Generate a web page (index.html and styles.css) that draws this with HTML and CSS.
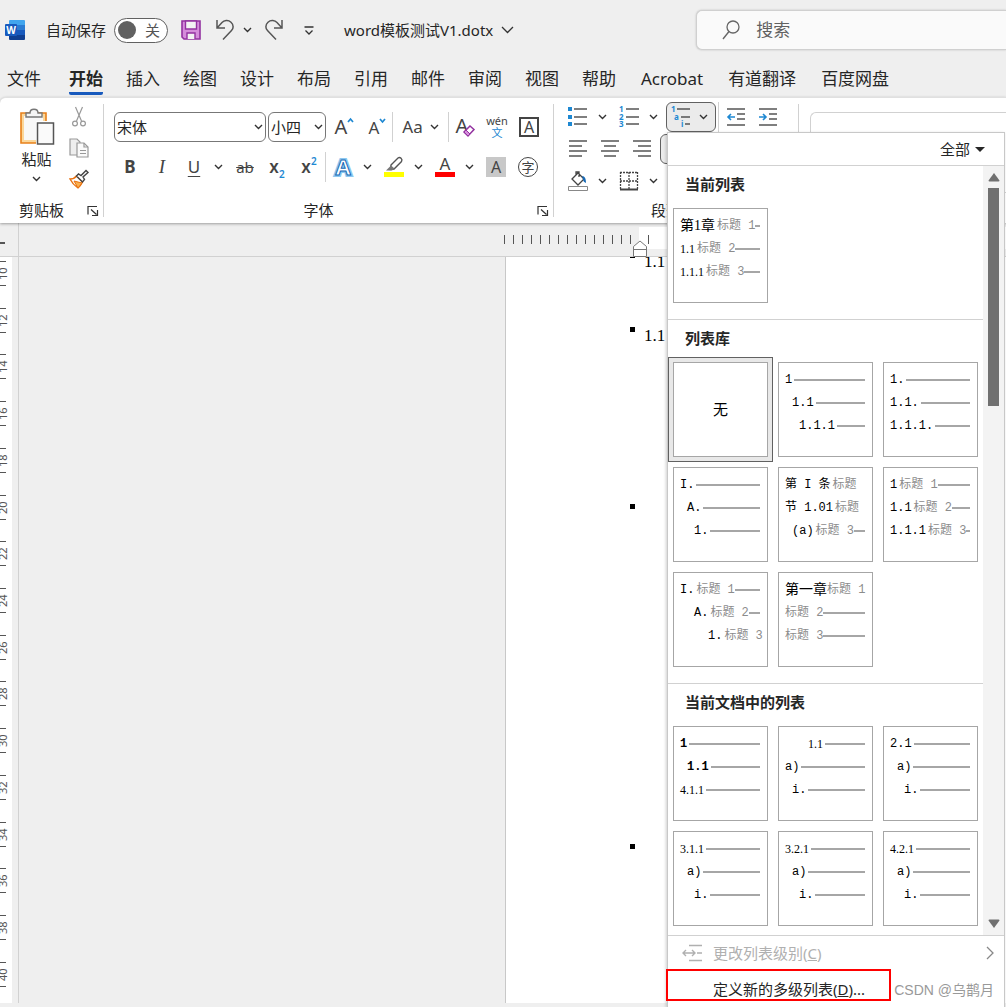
FILE: index.html
```html
<!DOCTYPE html>
<html lang="zh-CN">
<head>
  <meta charset="UTF-8">
  <meta name="viewport" content="width=device-width, initial-scale=1.0">
  <title>word模板测试V1.dotx</title>
  <link rel="stylesheet" href="styles.css">
</head>
<body>
  <svg class="defs" aria-hidden="true">
    <symbol id="caret" viewBox="0 0 9 6"><path d="M1 1l3.5 3.5L8 1" fill="none" stroke="#333" stroke-width="1.4"/></symbol>
    <symbol id="launcher" viewBox="0 0 12 12"><path d="M1 9.500V1.500h9M4 4.500l5.500 5M10.500 5v5.500H5" fill="none" stroke="#333" stroke-width="1.2"/></symbol>
  </svg>

  <header class="title-bar">
    <svg class="word-logo" width="20" height="20" viewBox="0 0 20 20">
      <path d="M5 0h14a1 1 0 0 1 1 1v4H4V1a1 1 0 0 1 1-1z" fill="#41a5ee"/>
      <path d="M4 5h16v5H4z" fill="#2b7cd3"/>
      <path d="M4 10h16v5H4z" fill="#185abd"/>
      <path d="M4 15h16v4a1 1 0 0 1-1 1H5a1 1 0 0 1-1-1z" fill="#103f91"/>
      <rect y="4" width="12" height="12" rx="1" fill="#185abd"/>
      <text class="logo-letter" x="6" y="14">W</text>
    </svg>
    <label class="autosave" for="autosave">自动保存
      <span class="switch"><input type="checkbox" id="autosave"><span>关</span></span>
    </label>
    <button class="quick save" aria-label="保存">
      <svg width="20" height="20" viewBox="0 0 20 20">
        <path d="M1 1h18v18H3l-2-2z" fill="#d58ddb" stroke="#9332a0" stroke-width="1.600"/>
        <path d="M4.500 1h11v8h-11z" fill="#f3f3f3" stroke="#9332a0" stroke-width="1.400"/>
        <path d="M6 19v-6h8v6" fill="#f3f3f3" stroke="#9332a0" stroke-width="1.400"/>
      </svg>
    </button>
    <button class="quick undo" aria-label="撤消">
      <svg width="20" height="22" viewBox="0 0 20 22"><path d="M2 1v8h8M2 9l5-5.500C9 1.500 13 .5 16 3.200c3 2.800 2.500 6.300.5 8.300L8 20.500" fill="none" stroke="#555" stroke-width="1.500"/></svg>
      <svg width="9" height="6"><use href="#caret"/></svg>
    </button>
    <button class="quick redo" aria-label="恢复">
      <svg width="20" height="22" viewBox="0 0 20 22"><path d="M18 1v8h-8M18 9l-5-5.500C11 1.500 7 .5 4 3.200 1 6 1.500 9.500 3.500 11.500L12 20.500" fill="none" stroke="#555" stroke-width="1.500"/></svg>
    </button>
    <button class="quick more" aria-label="自定义快速访问工具栏">
      <svg width="10" height="9" viewBox="0 0 10 9"><path d="M.5 1h9M1.500 4.500L5 8l3.500-3.500" fill="none" stroke="#333" stroke-width="1.300"/></svg>
    </button>
    <button class="doc-name">word模板测试V1.dotx
      <svg width="13" height="8" viewBox="0 0 13 8"><path d="M1 1l5.500 5.500L12 1" fill="none" stroke="#333" stroke-width="1.300"/></svg>
    </button>
    <label class="search">
      <svg width="18" height="20" viewBox="0 0 18 20"><circle cx="11" cy="7" r="6" fill="none" stroke="#666" stroke-width="1.300"/><path d="M7 11.500L1 19" stroke="#666" stroke-width="1.400"/></svg>
      <input type="text" placeholder="搜索" aria-label="搜索">
    </label>
  </header>

  <nav class="tabs">
    <a href="#" class="file">文件</a>
    <a href="#" class="active">开始</a>
    <a href="#">插入</a>
    <a href="#">绘图</a>
    <a href="#">设计</a>
    <a href="#">布局</a>
    <a href="#">引用</a>
    <a href="#">邮件</a>
    <a href="#">审阅</a>
    <a href="#">视图</a>
    <a href="#">帮助</a>
    <a href="#" class="addin">Acrobat</a>
    <a href="#" class="addin">有道翻译</a>
    <a href="#" class="addin">百度网盘</a>
  </nav>

  <div class="ribbon">
    <section class="group clipboard">
      <div class="controls">
        <button class="paste">
          <svg width="36" height="40" viewBox="0 0 36 40">
            <path d="M2 6h25v30H2z" fill="#fbd79a" stroke="#e8801a" stroke-width="1.600"/>
            <path d="M5 9h19v24H5z" fill="#f8f8f8"/>
            <path d="M7 10V6h4c0-5 8-5 8 0h4v4z" fill="#f5f5f5" stroke="#777" stroke-width="1.400"/>
            <path d="M17 14h19v24H17z" fill="#fff"/>
            <path d="M18.500 16h16v21h-16z" fill="#fafafa" stroke="#555" stroke-width="1.500"/>
          </svg>
          <span>粘贴</span>
          <svg width="9" height="6"><use href="#caret"/></svg>
        </button>
        <div class="stack">
          <button class="tool" aria-label="剪切">
            <svg width="14" height="20" viewBox="0 0 14 20" fill="none" stroke="#999" stroke-width="1.200"><path d="M3.500 0l6 14M10.500 0l-6 14"/><circle cx="3" cy="16.500" r="2.400"/><circle cx="11" cy="16.500" r="2.400"/></svg>
          </button>
          <button class="tool" aria-label="复制">
            <svg width="20" height="20" viewBox="0 0 20 20" fill="#eee" stroke="#999" stroke-width="1.200"><path d="M1 1h7l3 3v13H1z"/><path d="M8 5h7l4 4v10H8z" fill="#fafafa"/><path d="M15 5v4h4M11 12.500h6M11 15.500h6" fill="none"/></svg>
          </button>
          <button class="tool" aria-label="格式刷">
            <svg width="20" height="20" viewBox="0 0 20 20"><path d="M1 10c3 0 5-1 6.500-3l6 6c-1 2-2.500 4.500-4.500 6-3-2-6-5-8-9z" fill="#fff" stroke="#e8700f" stroke-width="1.400"/><path d="M5 12l8 2-4 5z" fill="#f9b04e" stroke="#e8700f"/><path d="M7.500 7l2-2 2.500 1.500L17 1.500l2 2-5 4.500 1.500 2.500-2 2.500z" fill="#fff" stroke="#444" stroke-width="1.400"/></svg>
          </button>
        </div>
      </div>
      <div class="group-label"><span>剪贴板</span><button aria-label="剪贴板选项"><svg width="12" height="12"><use href="#launcher"/></svg></button></div>
    </section>

    <section class="group font">
      <div class="controls">
        <div class="row">
          <span class="combo family">
            <select aria-label="字体"><option>宋体</option></select>
            <svg width="9" height="6"><use href="#caret"/></svg>
          </span>
          <span class="combo size">
            <select aria-label="字号"><option>小四</option></select>
            <svg width="9" height="6"><use href="#caret"/></svg>
          </span>
          <button class="tool" aria-label="增大字号">
            <svg width="20" height="20" viewBox="0 0 20 20"><text class="letter" x="7" y="17" font-size="20">A</text><path d="M14 5l2.500-3L19 5" fill="none" stroke="#1e88d2" stroke-width="1.700"/></svg>
          </button>
          <button class="tool" aria-label="减小字号">
            <svg width="20" height="20" viewBox="0 0 20 20"><text class="letter" x="8" y="17" font-size="17">A</text><path d="M14 2l2.500 3L19 2" fill="none" stroke="#1e88d2" stroke-width="1.700"/></svg>
          </button>
          <button class="case">Aa<svg width="9" height="6"><use href="#caret"/></svg></button>
          <button class="tool" aria-label="清除所有格式">
            <svg width="20" height="20" viewBox="0 0 20 20"><text class="letter" x="7" y="16" font-size="20">A</text><path d="M9 15l6-6 4 3.500-6 6.500z" fill="#fff" stroke="#9332a0" stroke-width="1.500"/><path d="M9 15l2-2 4 4-2 2z" fill="#d58ddb" stroke="#9332a0"/></svg>
          </button>
          <button class="tool pinyin"><span>wén</span><span class="wen">文</span></button>
          <button class="tool"><span class="boxed">A</span></button>
        </div>
        <div class="row">
          <button class="tool bold">B</button>
          <button class="tool italic">I</button>
          <button class="tool underline">U</button>
          <button class="caret" aria-label="下划线样式"><svg width="9" height="6"><use href="#caret"/></svg></button>
          <button class="tool strike">ab</button>
          <button class="tool script">x<sub>2</sub></button>
          <button class="tool script">x<sup>2</sup></button>
          <i class="divider"></i>
          <button class="tool" aria-label="文本效果">
            <svg width="20" height="20" viewBox="0 0 20 20"><text class="glow" x="10" y="18">A</text><text class="outline" x="10" y="18">A</text></svg>
          </button>
          <button class="caret" aria-label="文本效果选项"><svg width="9" height="6"><use href="#caret"/></svg></button>
          <button class="tool" aria-label="突出显示">
            <svg width="20" height="20" viewBox="0 0 20 20"><path d="M7 8l7-7c2-1.500 5 1 3.500 3.500L10 12l-3.500.5z" fill="#fff" stroke="#555" stroke-width="1.400"/><path d="M2 13.500l5-5 3.500 3-2.500 2z" fill="#777"/><path d="M0 15h20v5H0z" fill="#ff0"/></svg>
          </button>
          <button class="caret" aria-label="突出显示颜色"><svg width="9" height="6"><use href="#caret"/></svg></button>
          <button class="tool" aria-label="字体颜色">
            <svg width="20" height="20" viewBox="0 0 20 20"><text class="letter" x="10" y="13" font-size="17">A</text><path d="M0 15h20v5H0z" fill="#f00"/></svg>
          </button>
          <button class="caret" aria-label="字体颜色选项"><svg width="9" height="6"><use href="#caret"/></svg></button>
          <button class="tool"><span class="shaded">A</span></button>
          <button class="tool"><span class="circled">字</span></button>
        </div>
      </div>
      <div class="group-label"><span>字体</span><button aria-label="字体选项"><svg width="12" height="12"><use href="#launcher"/></svg></button></div>
    </section>

    <section class="group paragraph">
      <div class="controls">
        <div class="row">
          <button class="tool" aria-label="项目符号">
            <svg width="20" height="20" viewBox="0 0 20 20"><path d="M0 0h4v4H0zM0 8h4v4H0zM0 15h4v4H0z" fill="#1e88d2"/><path d="M6 2h13M6 10h13M6 17h13" stroke="#555" stroke-width="1.500"/></svg>
          </button>
          <button class="caret" aria-label="项目符号库"><svg width="9" height="6"><use href="#caret"/></svg></button>
          <button class="tool" aria-label="编号">
            <svg width="20" height="20" viewBox="0 0 20 20"><g class="digits"><text x="0" y="5">1</text><text x="0" y="13">2</text><text x="0" y="20">3</text></g><path d="M7 2h13M7 10h13M7 17h13" stroke="#555" stroke-width="1.500"/></svg>
          </button>
          <button class="caret" aria-label="编号库"><svg width="9" height="6"><use href="#caret"/></svg></button>
          <div class="dropdown">
            <button class="multilevel" aria-label="多级列表" aria-expanded="true">
              <svg width="20" height="20" viewBox="0 0 20 20"><g class="digits"><text x="0" y="5">1</text><text x="3" y="13">a</text><text x="10" y="20">i</text></g><path d="M6 2h13M10 10h9M14 17h5" stroke="#555" stroke-width="1.500"/></svg>
              <svg width="9" height="6"><use href="#caret"/></svg>
            </button>

            <div class="menu">
              <div class="menu-filter"><button>全部<i></i></button></div>
              <div class="menu-body">
                <div class="gallery">
                  <section>
                    <h3>当前列表</h3>
                    <div class="cards">
                      <button class="card">
                        <span class="level"><b class="song">第1章</b><em>标题 1</em><i></i></span>
                        <span class="level"><b class="times">1.1</b><em>标题 2</em><i></i></span>
                        <span class="level"><b class="times">1.1.1</b><em>标题 3</em><i></i></span>
                      </button>
                    </div>
                  </section>
                  <section>
                    <h3>列表库</h3>
                    <div class="cards">
                      <button class="card none selected">无</button>
                      <button class="card">
                        <span class="level"><b>1</b><i></i></span>
                        <span class="level in-1"><b>1.1</b><i></i></span>
                        <span class="level in-2"><b>1.1.1</b><i></i></span>
                      </button>
                      <button class="card">
                        <span class="level"><b>1.</b><i></i></span>
                        <span class="level"><b>1.1.</b><i></i></span>
                        <span class="level"><b>1.1.1.</b><i></i></span>
                      </button>
                      <button class="card">
                        <span class="level"><b>I.</b><i></i></span>
                        <span class="level in-1"><b>A.</b><i></i></span>
                        <span class="level in-2"><b>1.</b><i></i></span>
                      </button>
                      <button class="card">
                        <span class="level"><b>第 I 条</b><em>标题</em></span>
                        <span class="level"><b>节 1.01</b><em>标题</em></span>
                        <span class="level in-1"><b>(a)</b><em>标题 3</em><i></i></span>
                      </button>
                      <button class="card">
                        <span class="level"><b>1</b><em>标题 1</em><i></i></span>
                        <span class="level"><b>1.1</b><em>标题 2</em><i></i></span>
                        <span class="level"><b>1.1.1</b><em>标题 3</em><i></i></span>
                      </button>
                      <button class="card">
                        <span class="level"><b>I.</b><em>标题 1</em><i></i></span>
                        <span class="level in-2"><b>A.</b><em>标题 2</em><i></i></span>
                        <span class="level in-4"><b>1.</b><em>标题 3</em></span>
                      </button>
                      <button class="card">
                        <span class="level"><b class="hei">第一章</b><em>标题 1</em><i></i></span>
                        <span class="level"><em>标题 2</em><i></i></span>
                        <span class="level"><em>标题 3</em><i></i></span>
                      </button>
                    </div>
                  </section>
                  <section>
                    <h3>当前文档中的列表</h3>
                    <div class="cards">
                      <button class="card">
                        <span class="level"><b class="strong">1</b><i></i></span>
                        <span class="level in-1"><b class="strong">1.1</b><i></i></span>
                        <span class="level"><b class="times">4.1.1</b><i></i></span>
                      </button>
                      <button class="card">
                        <span class="level in-3"><b class="times">1.1</b><i></i></span>
                        <span class="level"><b>a)</b><i></i></span>
                        <span class="level in-1"><b>i.</b><i></i></span>
                      </button>
                      <button class="card">
                        <span class="level"><b>2.1</b><i></i></span>
                        <span class="level in-1"><b>a)</b><i></i></span>
                        <span class="level in-2"><b>i.</b><i></i></span>
                      </button>
                      <button class="card">
                        <span class="level"><b class="times">3.1.1</b><i></i></span>
                        <span class="level in-1"><b>a)</b><i></i></span>
                        <span class="level in-2"><b>i.</b><i></i></span>
                      </button>
                      <button class="card">
                        <span class="level"><b class="times">3.2.1</b><i></i></span>
                        <span class="level in-1"><b>a)</b><i></i></span>
                        <span class="level in-2"><b>i.</b><i></i></span>
                      </button>
                      <button class="card">
                        <span class="level"><b class="times">4.2.1</b><i></i></span>
                        <span class="level in-1"><b>a)</b><i></i></span>
                        <span class="level in-2"><b>i.</b><i></i></span>
                      </button>
                    </div>
                  </section>
                </div>
                <div class="scrollbar">
                  <svg width="12" height="9" viewBox="0 0 12 9"><path d="M6 0l5.500 7.500q0 1-1 1h-9q-1 0-1-1z" fill="#707070"/></svg>
                  <div class="track"><div class="thumb"></div></div>
                  <svg width="12" height="9" viewBox="0 0 12 9"><path d="M6 9L.5 1.500q0-1 1-1h9q1 0 1 1z" fill="#707070"/></svg>
                </div>
              </div>
              <div class="menu-footer">
                <button class="menu-item" disabled>
                  <svg width="20" height="18" viewBox="0 0 20 18" fill="none" stroke="#b0b0b0" stroke-width="1.400"><path d="M7 1.500h13M15 9h5M7 16.500h13M1 9h12M4 6L1 9l3 3M10 6l3 3-3 3"/></svg>
                  <span>更改列表级别(<u>C</u>)</span>
                  <svg class="arrow" width="8" height="14" viewBox="0 0 8 14"><path d="M1 1l6 6-6 6" fill="none" stroke="#888" stroke-width="1.300"/></svg>
                </button>
                <button class="menu-item define"><span>定义新的多级列表(<u>D</u>)...</span></button>
                <span class="watermark">CSDN @乌鹊月</span>
              </div>
            </div>
          </div>
          <i class="divider"></i>
          <button class="tool" aria-label="减少缩进量">
            <svg width="20" height="20" viewBox="0 0 20 20"><path d="M1 2h18M11 7h8M11 12h8M1 18h18" stroke="#555" stroke-width="1.500"/><path d="M9 10H2M5 7l-3 3 3 3" fill="none" stroke="#1e88d2" stroke-width="1.600"/></svg>
          </button>
          <button class="tool" aria-label="增加缩进量">
            <svg width="20" height="20" viewBox="0 0 20 20"><path d="M1 2h18M11 7h8M11 12h8M1 18h18" stroke="#555" stroke-width="1.500"/><path d="M1 10h7M5 7l3 3-3 3" fill="none" stroke="#1e88d2" stroke-width="1.600"/></svg>
          </button>
        </div>
        <div class="row">
          <button class="tool" aria-label="左对齐"><svg width="20" height="20" viewBox="0 0 20 20"><path d="M1 2h18M1 7h13M1 12h18M1 17h13" stroke="#555" stroke-width="1.500"/></svg></button>
          <button class="tool" aria-label="居中"><svg width="20" height="20" viewBox="0 0 20 20"><path d="M1 2h18M4 7h12M1 12h18M4 17h12" stroke="#555" stroke-width="1.500"/></svg></button>
          <button class="tool" aria-label="右对齐"><svg width="20" height="20" viewBox="0 0 20 20"><path d="M1 2h18M6 7h13M1 12h18M6 17h13" stroke="#555" stroke-width="1.500"/></svg></button>
          <button class="tool pressed" aria-label="两端对齐"></button>
        </div>
        <div class="row">
          <button class="tool" aria-label="底纹">
            <svg width="20" height="20" viewBox="0 0 20 20"><path d="M4 8l6-6 6 6-6 6zM8 4V1h3v5" fill="#fff" stroke="#444" stroke-width="1.300"/><path d="M14 5c3 0 4 3 4 7-2-1-3-2-3-4z" fill="#1769b5"/><path d="M.500 15.500h19v4H.500z" fill="#fff" stroke="#888"/></svg>
          </button>
          <button class="caret" aria-label="底纹颜色"><svg width="9" height="6"><use href="#caret"/></svg></button>
          <button class="tool" aria-label="边框">
            <svg width="20" height="20" viewBox="0 0 20 20"><path d="M1 1.500h18M1.500 1v17M18.500 1v17M10 1v17M1 10h18" stroke="#444" stroke-width="1.300" stroke-dasharray="2 1"/><path d="M1 18.500h18" stroke="#444" stroke-width="2"/></svg>
          </button>
          <button class="caret" aria-label="边框选项"><svg width="9" height="6"><use href="#caret"/></svg></button>
        </div>
      </div>
      <div class="group-label"><span>段落</span><button aria-label="段落选项"><svg width="12" height="12"><use href="#launcher"/></svg></button></div>
    </section>

    <section class="styles-gallery"></section>
  </div>

  <main class="workspace">
    <div class="corner"><i></i></div>
    <div class="ruler">
      <div class="ticks"></div>
      <div class="text-area"><i></i></div>
      <svg class="indent-marker" width="14" height="17" viewBox="0 0 14 17"><path d="M.500 16.500V6.500L7 1l6.500 5.500v10zM.500 9.500h13" fill="#fff" stroke="#777"/></svg>
    </div>
    <div class="side-ruler">
      <span>10</span><span>12</span><span>14</span><span>16</span><span>18</span><span>20</span><span>22</span><span>24</span><span>26</span><span>28</span><span>30</span><span>32</span><span>34</span><span>36</span><span>38</span><span>40</span>
    </div>
    <div class="canvas">
      <article class="page">
        <ul>
          <li class="short">1.1</li>
          <li class="medium">1.1</li>
          <li class="tall"></li>
          <li></li>
        </ul>
      </article>
    </div>
  </main>
</body>
</html>
```
FILE: styles.css
```css
* {
  margin: 0;
  padding: 0;
  box-sizing: border-box;
}

body {
  font-family: "Noto Sans", "Noto Sans CJK SC", sans-serif;
  font-size: 15px;
  line-height: 20px;
  color: #262626;
  background: #efefef;
  height: 100vh;
  display: flex;
  flex-direction: column;
  overflow: hidden;
}

button,
input,
select {
  font: inherit;
  color: inherit;
  background: none;
  border: none;
  outline: none;
  white-space: nowrap;
}

a {
  color: inherit;
  text-decoration: none;
}

svg {
  display: block;
  flex: none;
  overflow: visible;
}

.defs {
  position: absolute;
  width: 0;
  height: 0;
}

/* Title bar */
.title-bar {
  height: 60px;
  flex: none;
  display: flex;
  align-items: center;
  padding-left: 5px;
}

.logo-letter {
  font-size: 10px;
  font-weight: 700;
  fill: #fff;
  text-anchor: middle;
}

.autosave {
  display: flex;
  align-items: center;
  gap: 8px;
  margin-left: 21px;
}

.switch {
  width: 54px;
  height: 25px;
  display: flex;
  align-items: center;
  justify-content: space-between;
  padding: 0 7px 0 3px;
  border: 1px solid #616161;
  border-radius: 13px;
  background: #fff;
  color: #555;
}

.switch input {
  appearance: none;
  width: 18px;
  height: 18px;
  border-radius: 50%;
  background: #616161;
}

.quick {
  display: flex;
  align-items: center;
  gap: 8px;
}

.save { margin-left: 13px; }
.undo { margin-left: 14px; }
.redo { margin-left: 12px; }
.more { margin-left: 20px; }

.doc-name {
  display: flex;
  align-items: center;
  gap: 8px;
  margin-left: 30px;
}

.search {
  flex: 1;
  height: 40px;
  margin-left: 182px;
  padding-left: 25px;
  display: flex;
  align-items: center;
  gap: 16px;
  background: #fafafa;
  border: 1px solid #d0d0d0;
  border-right: none;
  border-radius: 6px 0 0 6px;
  box-shadow: 0 0 2px #bbb;
}

.search input {
  flex: 1;
  min-width: 0;
  font-size: 17px;
}

.search input::placeholder {
  color: #616161;
}

/* Tabs */
.tabs {
  height: 37px;
  flex: none;
  display: flex;
  gap: 23px;
  padding-left: 7px;
  font-size: 17px;
  line-height: 38px;
  white-space: nowrap;
}

.tabs .file {
  margin-right: 5px;
}

.tabs .addin {
  margin-left: 2px;
}

.tabs .active {
  font-weight: 700;
  height: 35px;
  border-bottom: 3px solid #185abd;
  border-radius: 2px;
}

/* Ribbon */
.ribbon {
  position: relative;
  z-index: 2;
  height: 126px;
  flex: none;
  display: flex;
  background: #fff;
  border-top: 1px solid #e0e0e0;
  border-radius: 6px 0 0 0;
  box-shadow: 0 1px 3px rgba(0, 0, 0, 0.35);
}

.group {
  flex: none;
  display: flex;
  flex-direction: column;
  justify-content: space-between;
  margin: 6px 0;
  border-right: 1px solid #d1d1d1;
}

.clipboard { width: 104px; }
.font { width: 450px; }
.paragraph { width: 245px; }

.group-label {
  display: flex;
  align-items: center;
  height: 14px;
}

.group-label span {
  flex: 1;
  text-align: center;
}

.group-label button {
  width: 20px;
  padding: 2px 0 0 4px;
}

.row {
  display: flex;
  align-items: center;
  height: 32px;
}

.tool {
  width: 32px;
  height: 30px;
  flex: none;
  display: flex;
  align-items: center;
  justify-content: center;
  color: #444;
}

.caret {
  flex: none;
  width: 19px;
  height: 30px;
  display: flex;
  align-items: center;
  padding-left: 4px;
}

.divider {
  flex: none;
  width: 1px;
  height: 30px;
  margin-right: 1px;
  background: #d1d1d1;
}

.clipboard .controls {
  display: flex;
  padding-left: 10px;
}

.paste {
  width: 53px;
  display: flex;
  flex-direction: column;
  align-items: center;
  gap: 2px;
  padding-top: 3px;
}

.paste svg:last-child {
  margin-top: 5px;
}

.stack {
  margin-top: -2px;
  display: flex;
  flex-direction: column;
  gap: 1px;
}

.font .controls {
  display: flex;
  flex-direction: column;
  gap: 8px;
  padding: 7px 0 0 10px;
}

.combo {
  display: grid;
  align-items: center;
  height: 30px;
  margin-right: 2px;
}

.combo select,
.combo svg {
  grid-area: 1 / 1;
}

.combo select {
  appearance: none;
  width: 100%;
  height: 30px;
  padding-left: 2px;
  border: 1px solid #777;
  border-radius: 6px;
}

.combo svg {
  justify-self: end;
  margin-right: 3px;
  pointer-events: none;
}

.family { width: 152px; }
.size { width: 58px; }

.letter,
.glow,
.outline {
  text-anchor: middle;
  fill: #444;
}

.glow,
.outline {
  font-size: 22px;
  font-weight: 700;
  fill: #fff;
  stroke: #8ec8f0;
  stroke-width: 4px;
}

.outline {
  stroke: #1769b5;
  stroke-width: 1px;
}

.case {
  width: 57px;
  height: 30px;
  display: flex;
  align-items: center;
  justify-content: center;
  gap: 7px;
  font-size: 17px;
  color: #444;
  border: solid #d1d1d1;
  border-width: 0 1px;
}

.pinyin {
  flex-direction: column;
  font-size: 11px;
  line-height: 12px;
}

.wen {
  color: #1e88d2;
}

.boxed,
.shaded,
.circled {
  width: 20px;
  height: 20px;
  line-height: 18px;
  font-size: 16px;
}

.boxed { border: 2px solid #444; line-height: 16px; }
.shaded { background: #c8c8c8; line-height: 20px; }
.circled { border: 1px solid #444; border-radius: 50%; font-size: 13px; }

.bold { font-weight: 700; font-size: 17px; }
.italic { font-family: "Liberation Serif", serif; font-style: italic; font-size: 19px; }
.underline { text-decoration: underline; text-underline-offset: 3px; font-size: 17px; }
.strike { text-decoration: line-through; }
.script { font-weight: 600; font-size: 17px; }

.script sub,
.script sup {
  font-size: 10px;
  line-height: 10px;
  color: #1e88d2;
}

.script sub { margin-top: 14px; }
.script sup { margin-bottom: 12px; }

.digits {
  font-size: 8px;
  font-weight: 700;
  fill: #1e88d2;
}

.paragraph .controls {
  margin-top: -3px;
  padding-left: 8px;
}

.dropdown {
  position: relative;
  margin: 0 2px;
}

.multilevel {
  width: 50px;
  height: 30px;
  display: flex;
  align-items: center;
  justify-content: center;
  gap: 8px;
  padding-right: 4px;
  background: #ebebeb;
  border: 1px solid #616161;
  border-radius: 6px;
}

.pressed {
  margin-left: 2px;
  background: #ebebeb;
  border: 1px solid #616161;
  border-radius: 6px;
}

.styles-gallery {
  flex: 1;
  margin: 14px 0 30px 11px;
  border: 1px solid #d1d1d1;
  border-right: none;
  border-radius: 6px 0 0 0;
}

/* Multilevel list menu */
.menu {
  position: absolute;
  top: 30px;
  left: 1px;
  z-index: 5;
  width: 338px;
  height: calc(100vh - 132px);
  display: flex;
  flex-direction: column;
  background: #fff;
  border: 1px solid #c8c8c8;
  border-bottom: none;
  box-shadow: -1px 1px 3px rgba(0, 0, 0, 0.2);
}

.menu-filter {
  height: 33px;
  flex: none;
  display: flex;
  justify-content: flex-end;
  padding-right: 19px;
  border-bottom: 1px solid #d1d1d1;
}

.menu-filter button {
  display: flex;
  align-items: center;
  gap: 5px;
}

.menu-filter i {
  border: 5px solid transparent;
  border-top-color: #262626;
  border-bottom: none;
}

.menu-body {
  flex: 1;
  min-height: 0;
  display: flex;
}

.gallery {
  flex: 1;
  overflow: hidden;
}

.gallery section {
  padding-bottom: 16px;
  border-bottom: 1px solid #d1d1d1;
}

.gallery section:last-child {
  border-bottom: none;
}

.gallery h3 {
  height: 42px;
  padding-left: 17px;
  font-size: 15px;
  line-height: 37px;
}

.cards {
  display: grid;
  grid-template-columns: repeat(3, 95px);
  gap: 10px;
  padding-left: 5px;
}

.card {
  height: 95px;
  display: flex;
  flex-direction: column;
  padding: 5px 7px 0 6px;
  background: #fff;
  border: 1px solid #a6a6a6;
  font-family: "Liberation Mono", "Noto Sans CJK SC", monospace;
  font-size: 12px;
  color: #000;
}

.card.none {
  align-items: center;
  justify-content: center;
  padding: 4px 0 0;
  font-size: 15px;
}

.card.selected {
  box-shadow: 0 0 0 4px #e8e8e8, 0 0 0 5px #616161;
}

.level {
  display: flex;
  align-items: center;
  height: 23px;
}

.level b {
  flex: none;
  font-weight: 400;
  margin-right: 2px;
}

.level em {
  flex: none;
  font-style: normal;
  color: #8c8c8c;
}

.level i {
  flex: 1;
  height: 2px;
  background: #a6a6a6;
}

.level .strong { font-weight: 700; }
.level .times { font-family: "Liberation Serif", serif; }
.level .song { font-family: "Liberation Serif", "Noto Sans CJK SC", serif; font-size: 14px; }
.level .hei { font-size: 14px; margin-right: 0; }

.in-1 { padding-left: 7px; }
.in-2 { padding-left: 14px; }
.in-3 { padding-left: 23px; }
.in-4 { padding-left: 28px; }

.scrollbar {
  width: 21px;
  display: flex;
  flex-direction: column;
  align-items: center;
  gap: 6px;
  padding: 7px 0;
  background: #f3f3f3;
}

.track {
  flex: 1;
  width: 11px;
}

.thumb {
  height: 30%;
  background: #707070;
}

.menu-footer {
  position: relative;
  flex: none;
  border-top: 1px solid #d1d1d1;
}

.menu-item {
  width: 100%;
  height: 34px;
  display: flex;
  align-items: center;
  gap: 11px;
  padding: 0 10px 0 14px;
}

.menu-item:disabled {
  color: #b0b0b0;
}

.menu-item .arrow {
  margin-left: auto;
}

.menu-item.define {
  position: relative;
  height: 37px;
  padding-left: 45px;
}

/* red frame drawn over the entry */
.define::after {
  content: '';
  position: absolute;
  left: -2px;
  top: -1px;
  width: 221px;
  height: 28px;
  border: 2px solid #f00;
}

.watermark {
  position: absolute;
  right: 10px;
  bottom: 7px;
  font-family: "Liberation Sans", "Noto Sans CJK SC", sans-serif;
  font-size: 14px;
  color: #999;
}

/* Document area */
.workspace {
  flex: 1;
  min-height: 0;
  display: grid;
  grid-template: 34px 1fr / 19px 1fr;
}

.corner {
  border: solid #d1d1d1;
  border-width: 0 1px 1px 0;
}

.corner i {
  display: block;
  width: 5px;
  height: 2px;
  margin-top: 19px;
  background: #555;
}

.ruler {
  position: relative;
  display: flex;
  padding: 4px 0 7px 485px;
  border-bottom: 1px solid #d1d1d1;
}

.ticks {
  width: 135px;
  height: 9px;
  margin-top: 8px;
  background: repeating-linear-gradient(90deg, #555 0 1px, transparent 1px 9px);
}

.text-area {
  flex: 1;
  padding: 8px 0 0 9px;
  background: #fff;
}

.text-area i {
  display: block;
  width: 1px;
  height: 9px;
  background: #555;
}

.indent-marker {
  position: absolute;
  left: 614px;
  bottom: -1px;
}

.side-ruler {
  display: flex;
  flex-direction: column;
  justify-content: space-between;
  margin-bottom: 4px;
  padding: 4px 0 16px;
  background: linear-gradient(90deg, #fff 12px, #efefef 12px);
  border-right: 1px solid #d1d1d1;
}

.side-ruler span {
  width: 6px;
  height: 25px;
  display: flex;
  align-items: center;
  justify-content: center;
  writing-mode: vertical-rl;
  transform: rotate(180deg);
  font-size: 11px;
  color: #555;
  border: solid #555;
  border-width: 1px 0;
}

.canvas {
  display: flex;
  min-height: 0;
  padding: 0 0 4px 486px;
}

.page {
  flex: 1;
  overflow: hidden;
  background: #fff;
  border-left: 1px solid #c8c8c8;
}

.page ul {
  list-style: none;
  margin-top: -4px;
  padding-left: 124px;
  font-family: "Liberation Serif", serif;
  font-size: 17px;
  line-height: 18px;
  color: #000;
}

.page li {
  display: flex;
  gap: 9px;
}

.page li::before {
  content: '';
  width: 5px;
  height: 5px;
  background: #000;
}

.short { height: 74px; }
.medium { height: 177px; }
.tall { height: 340px; }
```
